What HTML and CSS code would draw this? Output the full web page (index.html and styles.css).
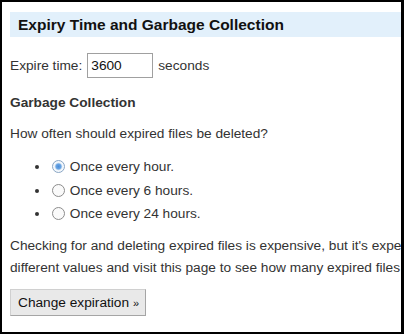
FILE: index.html
```html
<!DOCTYPE html>
<html>
<head>
<meta charset="utf-8">
<link rel="stylesheet" href="styles.css">
</head>
<body>
<div class="frame">
  <div class="page">
    <h2 class="title">Expiry Time and Garbage Collection</h2>
    <form class="form">
      <div class="expire">
        <label for="expire">Expire time:</label>
        <input id="expire" class="text-input" type="text" value="3600">
        <span>seconds</span>
      </div>
      <h3 class="subtitle">Garbage Collection</h3>
      <p class="question">How often should expired files be deleted?</p>
      <ul class="options">
        <li><label><input class="radio" type="radio" name="gc" checked> Once every hour.</label></li>
        <li><label><input class="radio" type="radio" name="gc"> Once every 6 hours.</label></li>
        <li><label><input class="radio" type="radio" name="gc"> Once every 24 hours.</label></li>
      </ul>
      <p class="note">Checking for and deleting expired files is expensive, but it's expensive to keep them around too. Try<br>different values and visit this page to see how many expired files were removed.</p>
      <button class="button" type="button">Change expiration <span class="raquo">»</span></button>
    </form>
  </div>
</div>
</body>
</html>
```
FILE: styles.css
```css
html, body {
  margin: 0;
  padding: 0;
  background: #000;
}
.frame {
  box-sizing: border-box;
  width: 404px;
  height: 334px;
  border: 2px solid #000;
  border-right-width: 3px;
  background: #fff;
  overflow: hidden;
}
.page {
  width: 700px;
  padding: 10px 8px 0 8px;
  font-family: "Liberation Sans", Arial, sans-serif;
  font-size: 13.7px;
  color: #333;
}
.title {
  margin: 0;
  width: 384px;
  height: 25px;
  line-height: 25px;
  padding: 0 8px;
  background: #e2f0fb;
  color: #111;
  font-size: 15.5px;
  font-weight: bold;
}
.form {
  margin: 0;
}
.expire {
  margin-top: 16px;
  display: flex;
  align-items: center;
  height: 25px;
}
.text-input {
  box-sizing: border-box;
  width: 66px;
  height: 25px;
  margin: 0 5px 0 5px;
  padding: 0 3px;
  border: 1px solid #a0a0a0;
  font-family: "Liberation Sans", Arial, sans-serif;
  font-size: 13.7px;
  color: #111;
  outline: none;
}
.subtitle {
  margin: 15px 0 0 0;
  line-height: 20px;
  font-size: 13.7px;
  font-weight: bold;
  color: #333;
}
.question {
  margin: 10px 0 0 0;
  line-height: 22px;
}
.options {
  margin: 10px 0 0 0;
  padding-left: 40px;
  line-height: 23.5px;
}
.radio {
  appearance: none;
  -webkit-appearance: none;
  box-sizing: border-box;
  width: 13px;
  height: 13px;
  margin: 0 1px 0 2px;
  border: 1px solid #8c8c8c;
  border-radius: 50%;
  background: #fafafa;
  vertical-align: -2px;
}
.radio:checked {
  border-color: #8aa6c4;
  background: radial-gradient(circle, #4a8cd8 0, #6aa5e4 2.6px, #c4dbf2 3.4px, #f4f8fc 4.2px);
}
.note {
  margin: 9px 0 0 0;
  line-height: 22px;
}
.button {
  margin-top: 10px;
  height: 27px;
  padding: 0 6px 0 7px;
  background: #e9e9e9;
  border: 1px solid #d0d0d0;
  border-right-color: #a5a5a5;
  border-bottom-color: #a5a5a5;
  border-radius: 0;
  font-family: "Liberation Sans", Arial, sans-serif;
  font-size: 13.7px;
  color: #111;
}
.raquo {
  font-size: 11px;
}
```
